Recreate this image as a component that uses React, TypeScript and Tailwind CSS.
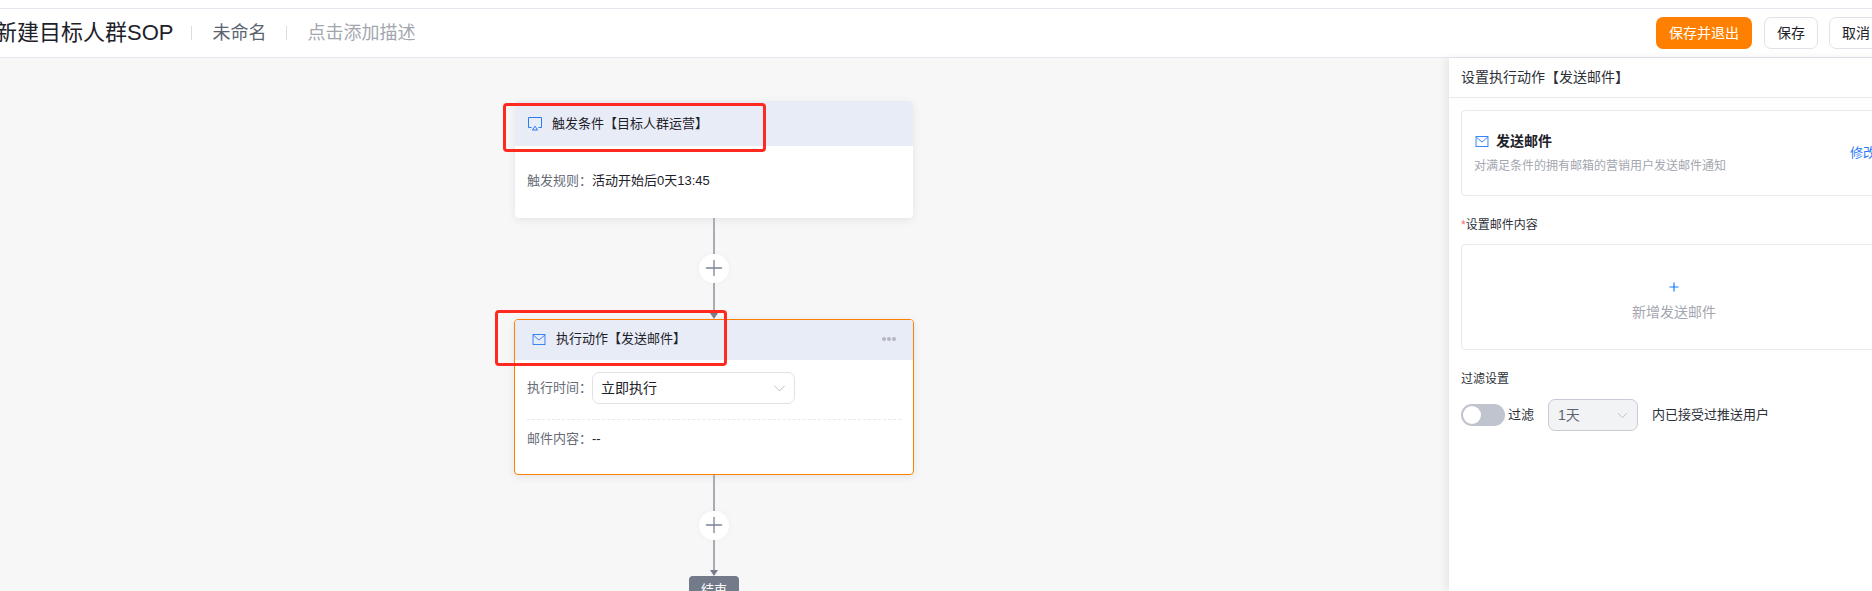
import { ChevronDown, Plus } from 'lucide-react';

const fontStack = '[font-family:"Liberation_Sans","Noto_Sans_CJK_SC",sans-serif]';

function MailIcon({ className }: { className: string }) {
  return (
    <svg viewBox="0 0 14 12" fill="none" stroke="#2b7bf6" strokeWidth="1" className={className}>
      <rect x="0.5" y="0.5" width="13" height="11" />
      <path d="M0.7 1.2L7 6.6l6.3-5.4" />
    </svg>
  );
}

function MonitorIcon() {
  return (
    <svg viewBox="0 0 14 14" fill="none" stroke="#2b7bf6" strokeWidth="1" className="h-[14px] w-[14px] shrink-0">
      <path d="M3.5 10.5H0.5V0.5h13v10h-3" />
      <path d="M7 9.2l2.6 3.8H4.4z" />
    </svg>
  );
}

// Vertical link between two nodes, with the add button in the middle
function Connector() {
  return (
    <div className="relative flex h-[101px] w-full flex-col items-center">
      <div className="h-[36px] w-[2px] bg-[#a9acb6]" />
      <div className="flex h-[30px] w-[30px] items-center justify-center rounded-full bg-white shadow-[0_0_6px_rgba(0,0,0,0.04)]">
        <Plus size={26} strokeWidth={1.2} className="text-[#7a8496]" />
      </div>
      <div className="h-[30px] w-[2px] bg-[#a9acb6]" />
      <div className="z-10 h-0 w-0 border-x-[4px] border-t-[6px] border-x-transparent border-t-[#777d8b]" />
    </div>
  );
}

function Header() {
  return (
    <header className="flex h-[50px] items-center justify-between border-y border-y-[#e6e7ee] bg-white">
      <div className="-ml-[5px] flex items-center">
        <h1 className="text-[22px] leading-[30px] font-normal text-[#1d2129]">新建目标人群SOP</h1>
        <span className="ml-[18px] h-[14px] w-px bg-[#dcdde3]" />
        <span className="ml-[20px] text-[18px] text-[#5c6370]">未命名</span>
        <span className="ml-[20px] h-[14px] w-px bg-[#dcdde3]" />
        <span className="ml-[20px] text-[18px] text-[#a3a6af]">点击添加描述</span>
      </div>
      <div className="flex items-center">
        <button className="h-[32px] w-[96px] rounded-[7px] bg-[#ff8000] text-[14px] text-white">保存并退出</button>
        <button className="ml-[12px] h-[32px] w-[54px] rounded-[7px] border border-[#e0e2ea] bg-white text-[14px] text-[#1d2129]">保存</button>
        <button className="ml-[11px] h-[32px] w-[54px] rounded-[7px] border border-[#e0e2ea] bg-white text-[14px] text-[#1d2129]">取消</button>
        <div className="w-[16px]" />
      </div>
    </header>
  );
}

function Canvas() {
  return (
    <main className="h-full w-[1449px] bg-[#f7f7f7] pt-[43px]">
      <div className="ml-[515px] flex w-[398px] flex-col items-center">
        {/* Trigger node */}
        <section className="h-[117px] w-full overflow-hidden rounded-[4px] bg-white shadow-[0_2px_8px_rgba(0,0,0,0.08)]">
          <div className="flex h-[45px] items-center gap-[10px] bg-[#e8ecf7] pl-[13px]">
            <MonitorIcon />
            <span className="text-[13px] text-[#1d2129]">触发条件【目标人群运营】</span>
          </div>
          <div className="flex pt-[26px] pl-[12px] text-[13px] leading-[18px]">
            <span className="w-[65px] text-[#666b76]">触发规则：</span>
            <span className="text-[#1d2129]">活动开始后0天13:45</span>
          </div>
        </section>

        <Connector />

        {/* Action node */}
        <section className="h-[156px] w-[400px] shrink-0 overflow-hidden rounded-[4px] border border-[#ff8000] bg-white shadow-[0_2px_8px_rgba(0,0,0,0.08)]">
          <div className="flex h-[40px] items-center bg-[#e8ecf7] pr-[17px] pb-[2px] pl-[17px]">
            <MailIcon className="h-[11px] w-[14px] shrink-0" />
            <span className="ml-[10px] text-[13px] text-[#1d2129]">执行动作【发送邮件】</span>
            <div className="ml-auto flex gap-[1px]">
              <span className="h-[4px] w-[4px] rounded-full bg-[#b4b8c2]" />
              <span className="h-[4px] w-[4px] rounded-full bg-[#b4b8c2]" />
              <span className="h-[4px] w-[4px] rounded-full bg-[#b4b8c2]" />
            </div>
          </div>
          <div className="px-[12px] pt-[12px]">
            <div className="flex items-center border-b border-dashed border-b-[#e8e9ef] pb-[15px] text-[13px]">
              <span className="w-[65px] text-[#666b76]">执行时间：</span>
              <div className="flex h-[32px] w-[203px] items-center justify-between rounded-[7px] border border-[#e0e2ea] pr-[5px] pl-[8px]">
                <span className="text-[14px] text-[#1d2129]">立即执行</span>
                <ChevronDown size={19} strokeWidth={1} className="text-[#a9adb8]" />
              </div>
            </div>
            <div className="flex pt-[10px] text-[13px] leading-[18px]">
              <span className="w-[65px] text-[#666b76]">邮件内容：</span>
              <span className="text-[#1d2129]">--</span>
            </div>
          </div>
        </section>

        <Connector />

        <div className="flex h-[30px] w-[50px] shrink-0 justify-center rounded-[4px] bg-[#737a8a] pt-[5px] text-[13px] leading-[18px] text-white">
          结束
        </div>
      </div>
    </main>
  );
}

function SidePanel() {
  return (
    <aside className="relative z-10 h-full w-[450px] shrink-0 bg-white shadow-[-3px_0_8px_rgba(0,0,0,0.07)]">
      <div className="flex h-[40px] items-center border-b border-b-[#e8e9ef] pl-[12px] text-[14px] text-[#2c3038]">
        设置执行动作【发送邮件】
      </div>
      <div className="px-[12px]">
        <div className="mt-[12px] flex h-[86px] w-[426px] items-center justify-between rounded-[4px] border border-[#e8e9ef] pr-[10px] pl-[12px]">
          <div>
            <div className="flex items-center gap-[7px] pl-[1px]">
              <MailIcon className="h-[11px] w-[14px] shrink-0" />
              <span className="text-[14px] font-bold text-[#1d2129]">发送邮件</span>
            </div>
            <p className="mt-[5px] text-[12px] text-[#a3a6af]">对满足条件的拥有邮箱的营销用户发送邮件通知</p>
          </div>
          <span className="text-[13px] whitespace-nowrap text-[#2b7bf6]">修改</span>
        </div>

        <div className="mt-[20px] text-[12px] leading-[18px] text-[#2c3038]">
          <span className="text-[#f56c6c]">*</span>设置邮件内容
        </div>
        <div className="mt-[10px] flex h-[106px] w-[426px] flex-col items-center rounded-[4px] border border-[#e8e9ef] pt-[35px]">
          <Plus size={14} strokeWidth={2} className="text-[#1677ff]" />
          <span className="mt-[8px] text-[14px] leading-[20px] text-[#a3a6af]">新增发送邮件</span>
        </div>

        <div className="mt-[20px] text-[12px] leading-[18px] text-[#2c3038]">过滤设置</div>
        <div className="mt-[11px] flex items-center">
          <div className="flex h-[22px] w-[44px] items-center rounded-full bg-[#c0c4ce] pl-[2px]">
            <span className="h-[18px] w-[18px] rounded-full bg-white" />
          </div>
          <span className="ml-[3px] text-[13px] text-[#2c3038]">过滤</span>
          <div className="ml-[14px] flex h-[32px] w-[90px] items-center justify-between rounded-[7px] border border-[#c9ccd5] bg-[#f2f3f5] pr-[6px] pl-[9px]">
            <span className="text-[14px] text-[#5c6370]">1天</span>
            <ChevronDown size={17} strokeWidth={1} className="text-[#a9adb8]" />
          </div>
          <span className="ml-[14px] text-[13px] text-[#2c3038]">内已接受过推送用户</span>
        </div>
      </div>
    </aside>
  );
}

export default function App() {
  return (
    <div className={`relative h-[591px] w-[1872px] overflow-hidden bg-white ${fontStack}`}>
      <div className="w-[1899px]">
        <div className="h-[8px] bg-white" />
        <Header />
        <div className="flex h-[533px]">
          <Canvas />
          <SidePanel />
        </div>
      </div>
      {/* Red annotation boxes drawn over the screenshot */}
      <div className="absolute top-[103px] left-[503px] h-[49px] w-[263px] rounded-[4px] border-[3px] border-[#ff2a1f]" />
      <div className="absolute top-[310px] left-[495px] h-[56px] w-[232px] rounded-[4px] border-[3px] border-[#ff2a1f]" />
    </div>
  );
}
